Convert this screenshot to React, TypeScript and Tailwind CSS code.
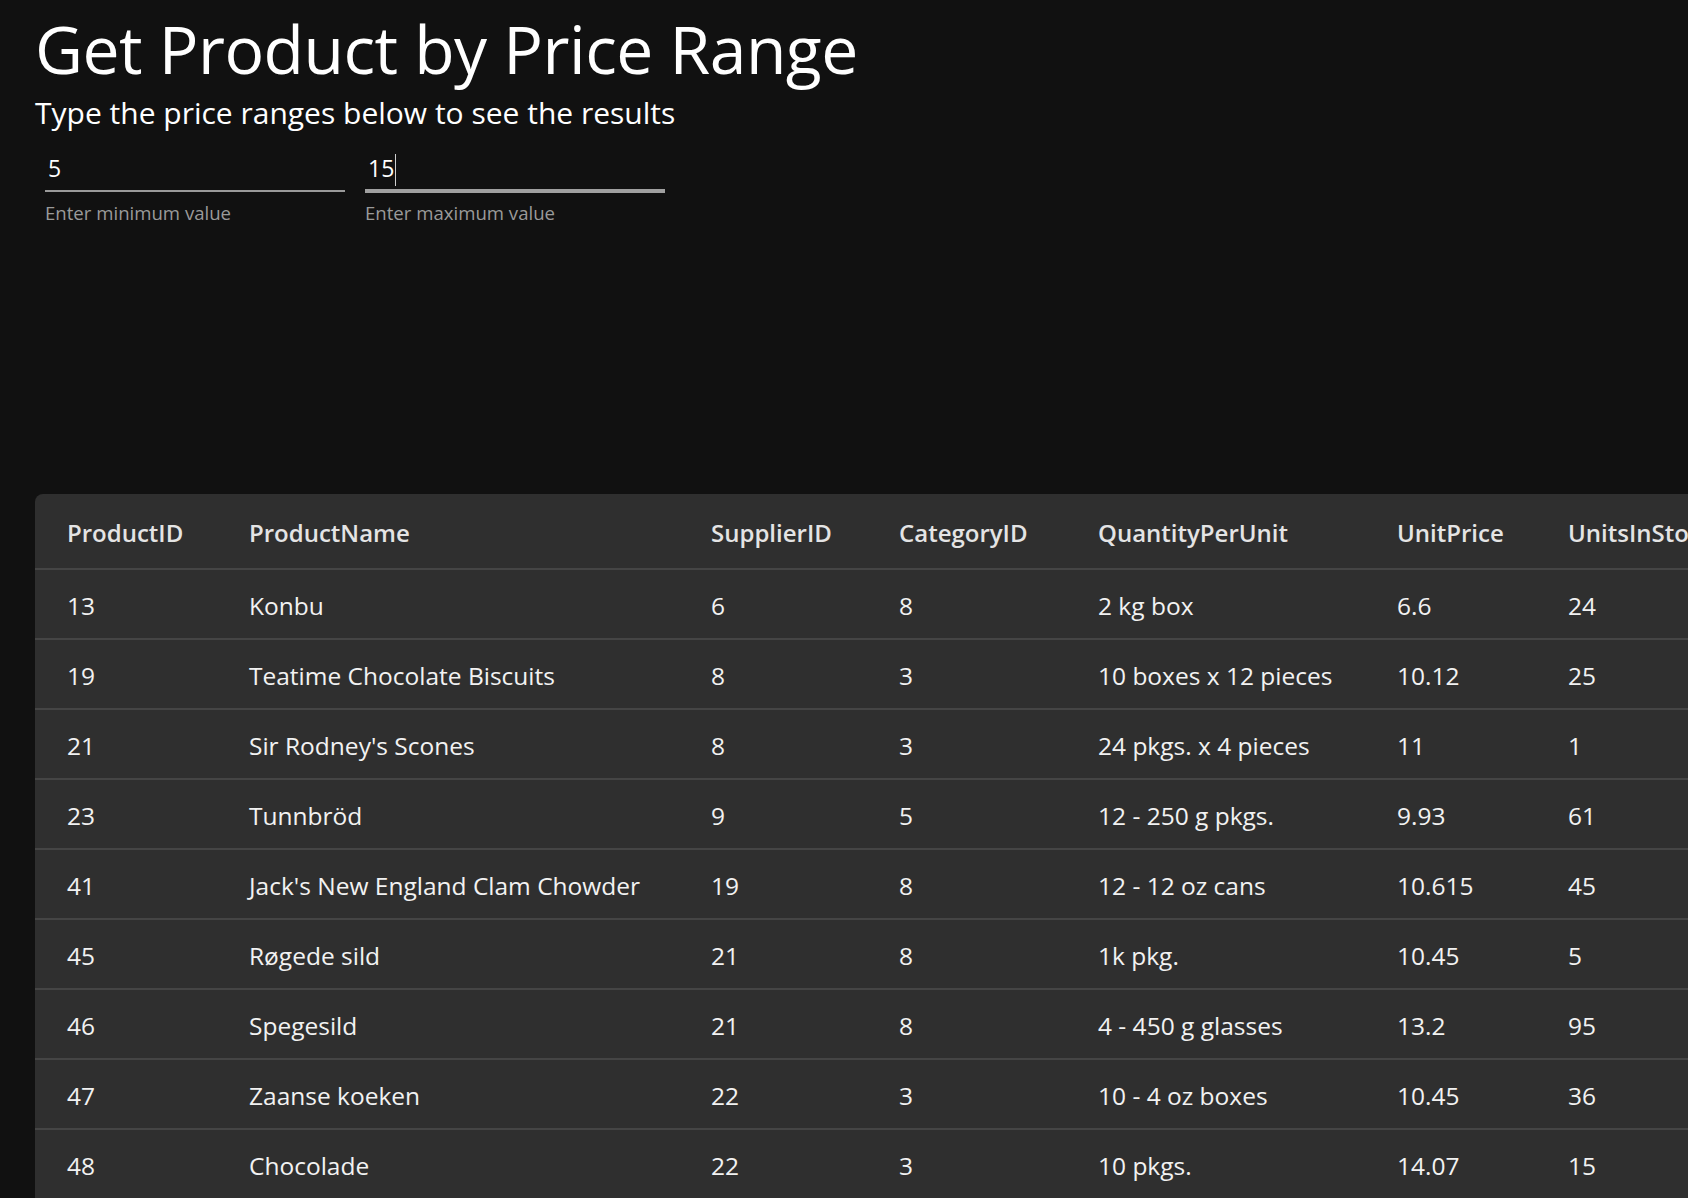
import React from 'react';

type Product = {
  id: number;
  name: string;
  supplier: number;
  category: number;
  qty: string;
  price: string;
  stock: number;
  onOrder: number;
  reorder: number;
  discontinued: string;
};

const products: Product[] = [
  { id: 13, name: 'Konbu', supplier: 6, category: 8, qty: '2 kg box', price: '6.6', stock: 24, onOrder: 0, reorder: 5, discontinued: 'False' },
  { id: 19, name: 'Teatime Chocolate Biscuits', supplier: 8, category: 3, qty: '10 boxes x 12 pieces', price: '10.12', stock: 25, onOrder: 0, reorder: 5, discontinued: 'False' },
  { id: 21, name: "Sir Rodney's Scones", supplier: 8, category: 3, qty: '24 pkgs. x 4 pieces', price: '11', stock: 1, onOrder: 40, reorder: 5, discontinued: 'False' },
  { id: 23, name: 'Tunnbröd', supplier: 9, category: 5, qty: '12 - 250 g pkgs.', price: '9.93', stock: 61, onOrder: 0, reorder: 25, discontinued: 'False' },
  { id: 41, name: "Jack's New England Clam Chowder", supplier: 19, category: 8, qty: '12 - 12 oz cans', price: '10.615', stock: 45, onOrder: 0, reorder: 10, discontinued: 'False' },
  { id: 45, name: 'Røgede sild', supplier: 21, category: 8, qty: '1k pkg.', price: '10.45', stock: 5, onOrder: 70, reorder: 15, discontinued: 'False' },
  { id: 46, name: 'Spegesild', supplier: 21, category: 8, qty: '4 - 450 g glasses', price: '13.2', stock: 95, onOrder: 0, reorder: 0, discontinued: 'False' },
  { id: 47, name: 'Zaanse koeken', supplier: 22, category: 3, qty: '10 - 4 oz boxes', price: '10.45', stock: 36, onOrder: 0, reorder: 0, discontinued: 'False' },
  { id: 48, name: 'Chocolade', supplier: 22, category: 3, qty: '10 pkgs.', price: '14.07', stock: 15, onOrder: 70, reorder: 25, discontinued: 'False' },
  { id: 52, name: 'Filo Mix', supplier: 24, category: 5, qty: '16 - 2 kg boxes', price: '7.7', stock: 38, onOrder: 0, reorder: 25, discontinued: 'False' },
];

// widths measured off the reference grid
const columns = [
  { label: 'ProductID', width: 'w-[182px]' },
  { label: 'ProductName', width: 'w-[462px]' },
  { label: 'SupplierID', width: 'w-[188px]' },
  { label: 'CategoryID', width: 'w-[199px]' },
  { label: 'QuantityPerUnit', width: 'w-[299px]' },
  { label: 'UnitPrice', width: 'w-[171px]' },
  { label: 'UnitsInStock', width: 'w-[200px]' },
  { label: 'UnitsOnOrder', width: 'w-[210px]' },
  { label: 'ReorderLevel', width: 'w-[200px]' },
  { label: 'Discontinued', width: 'w-[200px]' },
];

function PriceField({ value, label, focused }: { value: string; label: string; focused?: boolean }) {
  return (
    <div className="flex w-[300px] flex-col">
      <div className="flex h-[43px] items-end pl-[3px] pb-[9px] text-[23px] leading-none text-white">
        <span>{value}</span>
        {focused && <span className="ml-[1px] mb-[-6px] h-[32px] w-px bg-white/80" />}
      </div>
      <div className={focused ? 'h-[4px] bg-[#a0a0a0]' : 'mt-[1px] h-[2px] bg-[#9a9a9a]'} />
      <div className={focused ? 'mt-[8px] text-[18.6px] leading-[24px] text-[#9a9a9a]' : 'mt-[9px] text-[18.6px] leading-[24px] text-[#9a9a9a]'}>
        {label}
      </div>
    </div>
  );
}

export default function App() {
  return (
    <div className="h-screen w-full overflow-hidden bg-[#111111] font-['Open_Sans','Segoe_UI',sans-serif] text-white">
      <div className="pl-[35px] pt-[8px]">
        <h1 className="text-[66px] font-normal leading-[80px] tracking-[-0.5px]">Get Product by Price Range</h1>
        <p className="mt-[5px] text-[30px] leading-[40px]">Type the price ranges below to see the results</p>

        <div className="ml-[10px] mt-[13px] flex gap-[20px]">
          <PriceField value="5" label="Enter minimum value" />
          <PriceField value="15" label="Enter maximum value" focused />
        </div>
      </div>

      <div className="ml-[35px] mt-[269px] w-[2300px] rounded-t-lg bg-[#2f2f2f]">
        <table className="w-[2111px] table-fixed border-collapse text-left">
          <colgroup>
            {columns.map((c) => (
              <col key={c.label} className={c.width} />
            ))}
          </colgroup>
          <thead>
            <tr className="h-[75px] border-b-2 border-[#454545]">
              {columns.map((c) => (
                <th key={c.label} className="whitespace-nowrap pl-[32px] pt-[3px] text-[24px] font-semibold text-[#e4e4e4]">
                  {c.label}
                </th>
              ))}
            </tr>
          </thead>
          <tbody>
            {products.map((p) => (
              <tr key={p.id} className="h-[70px] border-b-2 border-[#454545]">
                {[p.id, p.name, p.supplier, p.category, p.qty, p.price, p.stock, p.onOrder, p.reorder, p.discontinued].map((v, i) => (
                  <td key={i} className="whitespace-nowrap pl-[32px] pt-[4px] text-[24.5px] text-[#f2f2f2]">
                    {v}
                  </td>
                ))}
              </tr>
            ))}
          </tbody>
        </table>
      </div>
    </div>
  );
}
